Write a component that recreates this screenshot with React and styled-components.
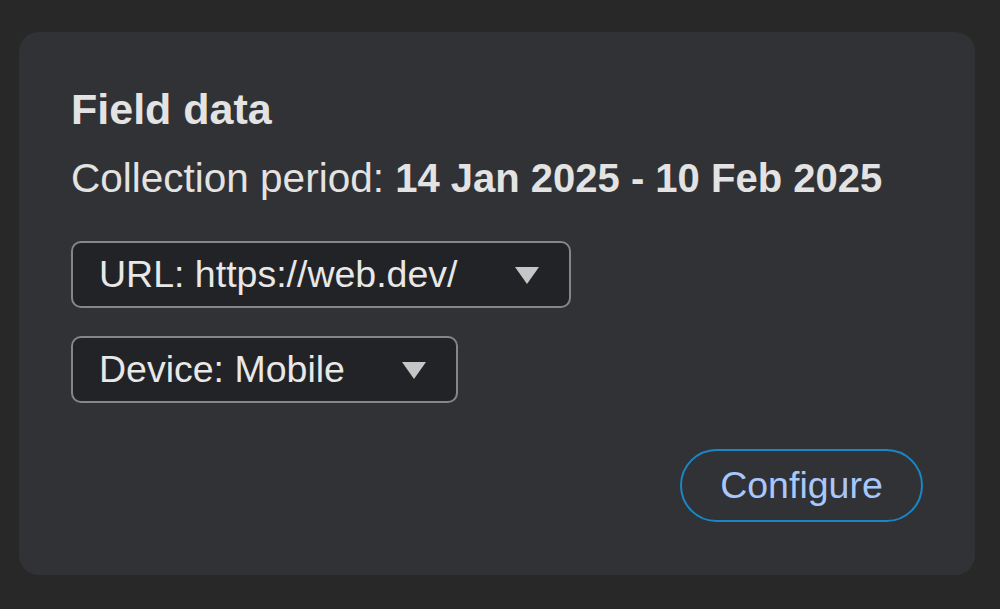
import React from 'react'
import styled, { createGlobalStyle } from 'styled-components'

const Global = createGlobalStyle`
  html, body {
    margin: 0;
    background: #282828;
    font-family: "Liberation Sans", Arial, sans-serif;
  }
`

const Page = styled.div`
  padding: 32px 25px 34px 19px;
`

const Card = styled.section`
  background: #313235;
  border-radius: 20px;
  padding: 53px 52px 53px 52px;
  display: flex;
  flex-direction: column;
  color: #e3e3e3;
`

const Title = styled.h2`
  margin: 0;
  font-size: 43px;
  font-weight: 700;
  line-height: 48px;
  color: #e3e3e3;
`

const Period = styled.p`
  margin: 22px 0 0;
  font-size: 40.5px;
  line-height: 46px;

  b {
    font-weight: 700;
    font-size: 40px;
  }
`

const Selects = styled.div`
  display: flex;
  flex-direction: column;
  align-items: flex-start;
  gap: 28px;
  margin-top: 40px;
`

const Select = styled.button`
  display: flex;
  align-items: center;
  gap: 57px;
  height: 67px;
  box-sizing: border-box;
  padding: 0 30px 0 26px;
  background: #222326;
  border: 2px solid #85868a;
  border-radius: 10px;
  color: #e8e8e8;
  font-family: inherit;
  font-size: 37.5px;
  cursor: pointer;
`

const Caret = styled.span`
  width: 0;
  height: 0;
  border-left: 12.5px solid transparent;
  border-right: 12.5px solid transparent;
  border-top: 17px solid #c6c6c6;
  margin-top: 2px;
`

const Footer = styled.div`
  display: flex;
  justify-content: flex-end;
  margin-top: 46px;
`

const Configure = styled.button`
  height: 73px;
  width: 243px;
  box-sizing: border-box;
  border: 2.5px solid #1a87c4;
  border-radius: 37px;
  background: transparent;
  color: #a8c7fa;
  font-family: inherit;
  font-size: 37.5px;
  cursor: pointer;
`

export default function App() {
  return (
    <Page>
      <Global />
      <Card>
        <Title>Field data</Title>
        <Period>
          Collection period: <b>14 Jan 2025 - 10 Feb 2025</b>
        </Period>
        <Selects>
          <Select>
            URL: https://web.dev/
            <Caret />
          </Select>
          <Select>
            Device: Mobile
            <Caret />
          </Select>
        </Selects>
        <Footer>
          <Configure>Configure</Configure>
        </Footer>
      </Card>
    </Page>
  )
}
